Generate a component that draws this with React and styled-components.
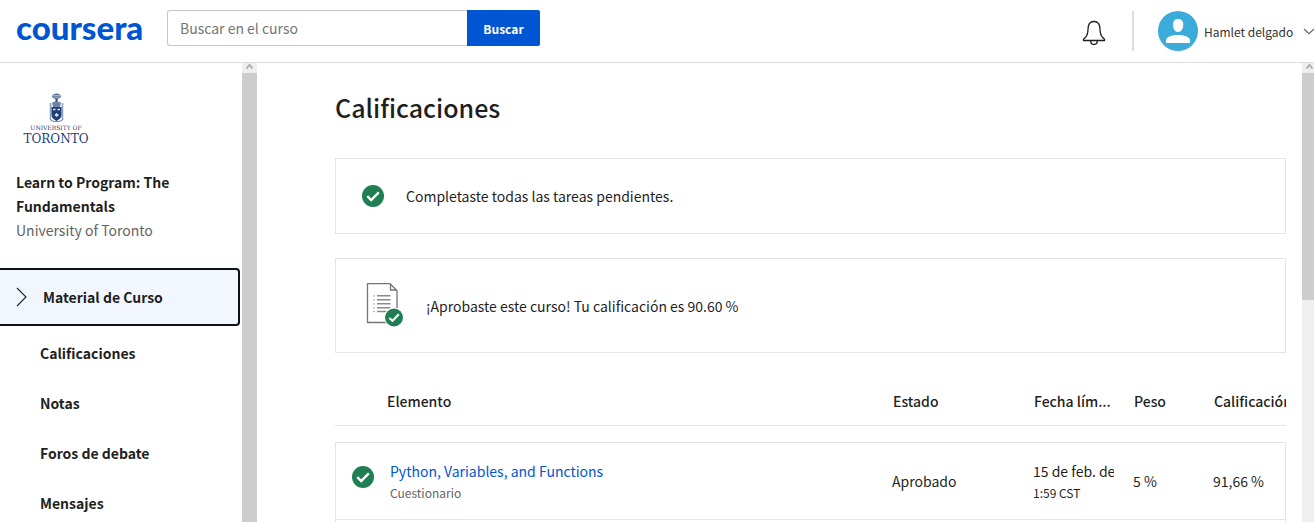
import React from 'react';
import styled, { createGlobalStyle } from 'styled-components';

const GlobalStyle = createGlobalStyle`
  *, *::before, *::after { box-sizing: border-box; }
  body {
    margin: 0;
    background: #fff;
    color: #1f1f1f;
    font-family: "Noto Sans CJK JP", "Noto Sans", sans-serif;
    font-size: 14px;
    line-height: 24px;
  }
  button, input { font-family: inherit; }
`;

const Shell = styled.div`
  height: 100vh;
  display: flex;
  flex-direction: column;
  overflow: hidden;
`;

const Header = styled.header`
  flex: none;
  display: flex;
  justify-content: space-between;
  padding-left: 16px;
  height: 63px;
  border-bottom: 1px solid #dcdcdc;
`;

const Brand = styled.a`
  width: 151px;
  color: #0056d2;
  font-family: Lato, sans-serif;
  font-size: 33px;
  font-weight: 900;
  line-height: 54px;
  text-decoration: none;
`;

const HeaderStart = styled.div`
  display: flex;
  align-items: flex-start;
`;

const SearchForm = styled.form`
  display: flex;
  margin-top: 10px;
  height: 36px;
`;

const SearchInput = styled.input`
  width: 300px;
  padding: 0 12px;
  border: 1px solid #c7c6d6;
  border-right: 0;
  border-radius: 3px 0 0 3px;
  font-size: 14px;
  color: #1f1f1f;
  &::placeholder { color: #757575; }
`;

const SearchButton = styled.button`
  width: 73px;
  padding: 0;
  border: 0;
  border-radius: 0 2px 2px 0;
  background: #0056d2;
  color: #fff;
  font-size: 12px;
  font-weight: 700;
`;

const HeaderEnd = styled.div`
  display: flex;
  align-items: center;
`;

const IconButton = styled.button`
  display: flex;
  padding: 4px 0 0;
  border: 0;
  margin-right: 26px;
  background: none;
`;

const UserButton = styled.button`
  display: flex;
  align-items: center;
  height: 40px;
  padding: 0 0 0 24px;
  border: 0;
  border-left: 2px solid #dcdcdc;
  background: none;
  color: #333;
  font-size: 12px;
`;

const UserName = styled.span`
  min-width: 93px;
  margin: 0 6px;
  text-align: left;
  white-space: nowrap;
`;

const Body = styled.div`
  flex: 1;
  min-height: 0;
  display: flex;
`;

const Sidebar = styled.aside`
  flex: none;
  width: 242px;
  overflow: hidden;
`;

const School = styled.div`
  display: flex;
  flex-direction: column;
  align-items: center;
  width: 80px;
  margin: 30px 0 24px 16px;
  color: #1f3f74;
  font-family: "DejaVu Serif", serif;
`;

const SchoolSmall = styled.span`
  font-size: 6px;
  line-height: 8px;
  white-space: nowrap;
`;

const SchoolLarge = styled.span`
  font-size: 12px;
  line-height: 14px;
`;

const CourseInfo = styled.div`
  padding: 0 16px;
  margin-bottom: 26px;
`;

const CourseTitle = styled.h2`
  margin: 0;
  font-size: 14px;
  font-weight: 700;
`;

const CourseSchool = styled.p`
  margin: 0;
  color: #636363;
`;

const MaterialButton = styled.button`
  display: flex;
  align-items: center;
  gap: 16px;
  width: 240px;
  height: 58px;
  padding: 0 16px;
  border: 2px solid #0f1114;
  border-left: 0;
  border-radius: 0 4px 4px 0;
  background: #f2f7ff;
  color: #1f1f1f;
  font-size: 14px;
  font-weight: 700;
`;

const NavLinks = styled.nav`
  display: flex;
  flex-direction: column;
  padding-top: 2px;
`;

const NavLink = styled.a`
  padding: 13px 40px;
  color: #1f1f1f;
  font-weight: 700;
  text-decoration: none;
`;

const Track = styled.div`
  flex: none;
  display: flex;
  flex-direction: column;
  width: ${(p) => p.$width};
  background: #efefef;
  overflow: hidden;
`;

const TrackArrow = styled.svg`
  flex: none;
  width: 15px;
  height: 10px;
`;

const Thumb = styled.div`
  height: ${(p) => p.$height};
  background: #cdcdcd;
`;

const Main = styled.main`
  flex: 1;
  min-width: 0;
  overflow: hidden;
  padding: 26px 16px 0 78px;
`;

const Title = styled.h1`
  margin: 0 0 33px;
  font-size: 25px;
  font-weight: 500;
  line-height: 36px;
`;

const Notice = styled.section`
  display: flex;
  align-items: center;
  gap: 22px;
  height: ${(p) => p.$height};
  margin-bottom: 24px;
  padding: 0 26px;
  border: 1px solid #e5e5e5;
`;

const GradeTable = styled.table`
  width: 100%;
  table-layout: fixed;
  border-collapse: separate;
  border-spacing: 0;
  tbody::before {
    content: "";
    display: block;
    height: 16px;
  }
`;

const Col = styled.col`
  width: ${(p) => p.$width};
`;

const HeadCell = styled.th`
  height: 49px;
  padding: 0 0 0 ${(p) => (p.$first ? '52px' : '1px')};
  border-bottom: 1px solid #e5e5e5;
  font-size: 14px;
  font-weight: 500;
  text-align: left;
  white-space: nowrap;
  overflow: hidden;
`;

const Cell = styled.td`
  height: 77px;
  padding: 0;
  border-top: 1px solid #e5e5e5;
  vertical-align: middle;
  white-space: nowrap;
  overflow: hidden;
  &:first-child { border-left: 1px solid #e5e5e5; padding-left: 16px; }
  &:last-child { border-right: 1px solid #e5e5e5; }
`;

const Clip = styled.div`
  width: 81px;
  overflow: hidden;
`;

const Item = styled.div`
  display: flex;
  align-items: flex-start;
  gap: 16px;
  svg { flex: none; margin-top: 7px; }
`;

const ItemLink = styled.a`
  color: #0056d2;
  text-decoration: none;
`;

const Small = styled.div`
  color: ${(p) => (p.$muted ? '#636363' : 'inherit')};
  font-size: 12px;
  line-height: 20px;
`;

const Check = () => (
  <svg width="22" height="22" viewBox="0 0 22 22" aria-hidden="true">
    <circle cx="11" cy="11" r="11" fill="#1f7f53" />
    <path d="M5.3 11.2 9.2 15 16.8 7.4" fill="none" stroke="#fff" strokeWidth="2.4" />
  </svg>
);

const Certificate = () => (
  <svg width="42" height="46" viewBox="0 2 42 46" aria-hidden="true">
    <path d="M5.5 2.7H28l7 7V41.500H5.500Z" fill="#fff" stroke="#757575" strokeWidth="1.300" />
    <path d="M28.500 2.700V9H35" fill="none" stroke="#757575" strokeWidth="1.300" />
    <path d="M15 14.800H28.500M15 18.800H28.500M15 22.800H28.500M15 26.800H28.500M15 30.500H24" stroke="#8a8a8a" strokeWidth="1.500" />
    <path d="M11 14.800H13M11 18.800H13M11 22.800H13M11 26.800H13M11 30.500H13" stroke="#bdbdbd" strokeWidth="1.300" />
    <circle cx="32" cy="36.500" r="10" fill="#fff" />
    <circle cx="32" cy="36.500" r="9" fill="#1f7f53" />
    <path d="M27.300 36.900 30.500 39.900 36.800 33.300" fill="none" stroke="#fff" strokeWidth="2" />
  </svg>
);

const Bell = () => (
  <svg width="24" height="26" viewBox="0 0 24 26" fill="none" stroke="#1f1f1f" strokeWidth="1.300" aria-hidden="true">
    <path d="M1.500 20.500V19.200C4 17.500 5.200 15.500 5.700 12.500L6.300 6.500C7 3 9 1.500 12 1.500S17 3 17.700 6.500L18.300 12.500C18.800 15.500 20 17.500 22.500 19.200V20.500Z" />
    <path d="M8.700 20.500C8.700 23 10 24.500 12 24.500S15.300 23 15.300 20.500" />
  </svg>
);

const Avatar = () => (
  <svg width="40" height="40" viewBox="0 0 40 40" aria-hidden="true">
    <circle cx="20" cy="20" r="20" fill="#3bacd9" />
    <path d="M20 8C23.200 8 25.300 10.200 25.300 13.500C25.300 17.500 23.200 21 20 21S15 17.500 15 13.500C15 10.200 17 8 20 8Z" fill="#fff" />
    <path d="M8 32V29C8.500 26.500 12 24 20 24S31.500 26.500 32 29V32Z" fill="#fff" />
  </svg>
);

const ChevronDown = () => (
  <svg width="11" height="12" viewBox="0 0 11 12" aria-hidden="true">
    <path d="M1 4 6 8.700 11 4" fill="none" stroke="#636363" strokeWidth="1.200" />
  </svg>
);

const ChevronRight = () => (
  <svg width="11" height="20" viewBox="0 0 11 20" aria-hidden="true">
    <path d="M1 1 10 10 1 19" fill="none" stroke="#1f1f1f" strokeWidth="1.100" />
  </svg>
);

const Crest = () => (
  <svg width="18" height="31" viewBox="0 0 18 31" aria-hidden="true">
    <path d="M5 3C6 1 8 .3 9.500 .5C12 .3 14 2 14 3.500C14 5 12 6 9.500 6S4.500 5 5 3Z" fill="#5d769b" />
    <path d="M6 2.500H13M5 4.200H14" stroke="#b7c3d4" strokeWidth=".8" />
    <path d="M9.500 6V10" stroke="#1f3f74" strokeWidth="2" />
    <path d="M5 9.500C7 8 12 8 14 9.500L13 14H6Z" fill="#6e85a7" />
    <path d="M3.500 10V26M15.500 10V26" stroke="#8fa2bd" strokeWidth="1.600" />
    <path d="M4.500 14H14.500V22C14.500 25 12 26.500 9.500 28C7 26.500 4.500 25 4.500 22Z" fill="#1f3f74" />
    <path d="M6 16.500H8.500M10.500 16.500H13" stroke="#dce3ec" strokeWidth="1.600" />
    <path d="M7.500 22 9.500 20 12 22 9.500 24Z" fill="#dce3ec" />
    <path d="M3 26C5 29.500 14 29.500 16 26" fill="none" stroke="#7c91b0" strokeWidth="1.400" />
  </svg>
);

const Scrollbar = ({ width, thumb }) => (
  <Track $width={width} aria-hidden="true">
    <TrackArrow viewBox="0 0 15 10">
      <path d="M4.500 5.500 7.500 2 10.500 5.500" fill="none" stroke="#aaa" strokeWidth="1.800" />
    </TrackArrow>
    <Thumb $height={thumb} />
  </Track>
);

const links = ['Calificaciones', 'Notas', 'Foros de debate', 'Mensajes'];

export default function App() {
  return (
    <Shell>
      <GlobalStyle />
      <Header>
        <HeaderStart>
          <Brand href="#inicio">coursera</Brand>
          <SearchForm role="search" onSubmit={(e) => e.preventDefault()}>
            <SearchInput aria-label="Buscar en el curso" placeholder="Buscar en el curso" />
            <SearchButton type="submit">Buscar</SearchButton>
          </SearchForm>
        </HeaderStart>
        <HeaderEnd>
          <IconButton type="button" aria-label="Notificaciones"><Bell /></IconButton>
          <UserButton type="button">
            <Avatar />
            <UserName>Hamlet delgado</UserName>
            <ChevronDown />
          </UserButton>
        </HeaderEnd>
      </Header>
      <Body>
        <Sidebar>
          <School>
            <Crest />
            <SchoolSmall>UNIVERSITY OF</SchoolSmall>
            <SchoolLarge>TORONTO</SchoolLarge>
          </School>
          <CourseInfo>
            <CourseTitle>Learn to Program: The Fundamentals</CourseTitle>
            <CourseSchool>University of Toronto</CourseSchool>
          </CourseInfo>
          <MaterialButton type="button"><ChevronRight />Material de Curso</MaterialButton>
          <NavLinks>
            {links.map((label) => <NavLink key={label} href="#seccion">{label}</NavLink>)}
          </NavLinks>
        </Sidebar>
        <Scrollbar width="15px" thumb="100%" />
        <Main>
          <Title>Calificaciones</Title>
          <Notice $height="76px">
            <Check />
            <span>Completaste todas las tareas pendientes.</span>
          </Notice>
          <Notice $height="95px">
            <Certificate />
            <span>¡Aprobaste este curso! Tu calificación es 90.60 %</span>
          </Notice>
          <GradeTable>
            <colgroup>
              <Col />
              <Col $width="141px" />
              <Col $width="100px" />
              <Col $width="80px" />
              <Col $width="73px" />
            </colgroup>
            <thead>
              <tr>
                <HeadCell $first>Elemento</HeadCell>
                <HeadCell>Estado</HeadCell>
                <HeadCell>Fecha lím...</HeadCell>
                <HeadCell>Peso</HeadCell>
                <HeadCell>Calificación</HeadCell>
              </tr>
            </thead>
            <tbody>
              <tr>
                <Cell>
                  <Item>
                    <Check />
                    <div>
                      <ItemLink href="#tarea">Python, Variables, and Functions</ItemLink>
                      <Small $muted>Cuestionario</Small>
                    </div>
                  </Item>
                </Cell>
                <Cell>Aprobado</Cell>
                <Cell>
                  <Clip>15 de feb. de</Clip>
                  <Small>1:59 CST</Small>
                </Cell>
                <Cell>5 %</Cell>
                <Cell>91,66 %</Cell>
              </tr>
              <tr aria-hidden="true">
                <Cell /><Cell /><Cell /><Cell /><Cell />
              </tr>
            </tbody>
          </GradeTable>
        </Main>
        <Scrollbar width="12px" thumb="227px" />
      </Body>
    </Shell>
  );
}
